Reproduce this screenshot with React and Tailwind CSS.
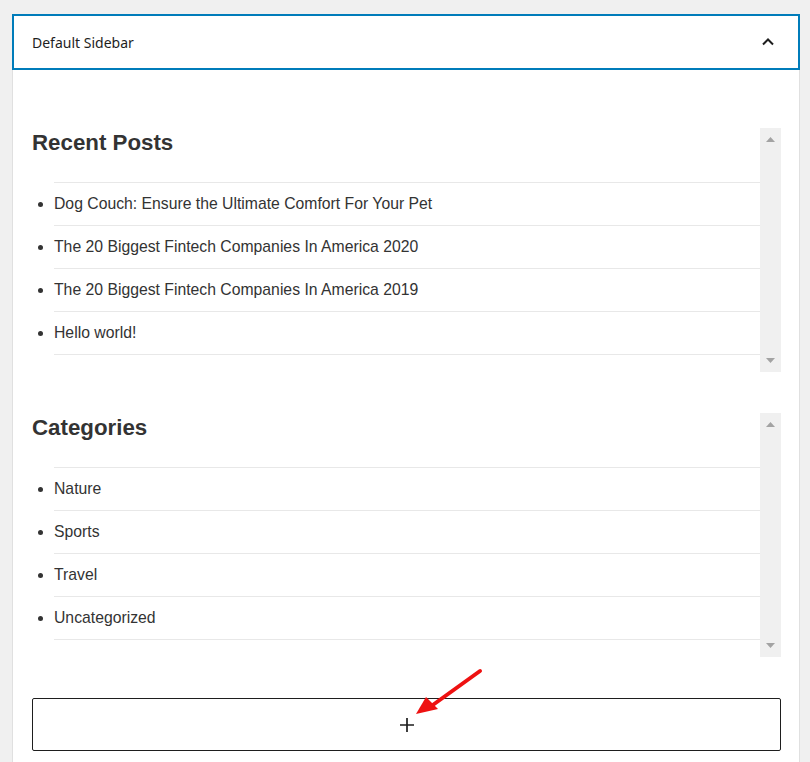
import React from 'react'

const recentPosts = [
    'Dog Couch: Ensure the Ultimate Comfort For Your Pet',
    'The 20 Biggest Fintech Companies In America 2020',
    'The 20 Biggest Fintech Companies In America 2019',
    'Hello world!',
]

const categories = ['Nature', 'Sports', 'Travel', 'Uncategorized']

const Scrollbar = () => (
    <div className="w-[21px] bg-[#f0f0f0] flex flex-col items-center justify-between py-[9px]">
        <svg width="9" height="5" viewBox="0 0 9 5"><path d="M0 5 L4.5 0 L9 5 Z" fill="#a3a3a3" /></svg>
        <svg width="9" height="5" viewBox="0 0 9 5"><path d="M0 0 L4.5 5 L9 0 Z" fill="#a3a3a3" /></svg>
    </div>
)

const Widget = ({ title, items }) => (
    <div className="flex h-[244px]">
        <div className="flex-1 pr-0">
            <h2 className="text-[22.3px] font-bold leading-[30px] text-[#333] mb-[24px]">{title}</h2>
            <ul className="list-disc pl-[22px] text-[15.75px] text-[#333]">
                {items.map((item, i) => (
                    <li
                        key={item}
                        className={`leading-[42px] border-t border-[#e8e8e8] ${i === items.length - 1 ? 'border-b' : ''}`}
                    >
                        {item}
                    </li>
                ))}
            </ul>
        </div>
        <Scrollbar />
    </div>
)

const App = () => {
    return (
        <div className="h-[762px] overflow-hidden bg-[#f0f0f0] pt-[14px] pl-[12px] pr-[10px] relative" style={{ fontFamily: '"Liberation Sans", Arial, sans-serif' }}>
            <div className="bg-white border-l border-r border-[#e0e0e0] min-h-[800px]">
                <div className="h-[56px] border-2 border-[#007cba] -mx-px pl-[18px] pr-[23px] flex items-center justify-between">
                    <span className="text-[14px] text-[#1e1e1e]" style={{ fontFamily: '"Noto Sans", "Open Sans", sans-serif' }}>Default Sidebar</span>
                    <svg width="14" height="10" viewBox="0 0 14 10" fill="none">
                        <path d="M2 7.5 L7 2.5 L12 7.5" stroke="#1e1e1e" strokeWidth="2" />
                    </svg>
                </div>
                <div className="pt-[58px] pl-[19px] pr-[18px] flex flex-col gap-[41px]">
                    <Widget title="Recent Posts" items={recentPosts} />
                    <Widget title="Categories" items={categories} />
                    <button className="h-[53px] border border-[#1e1e1e] rounded-[2px] flex items-center justify-center bg-white">
                        <svg width="14" height="14" viewBox="0 0 14 14">
                            <path d="M7 0 V14 M0 7 H14" stroke="#1e1e1e" strokeWidth="1.7" />
                        </svg>
                    </button>
                </div>
            </div>
            <svg className="absolute left-[410px] top-[665px]" width="80" height="56" viewBox="0 0 80 56">
                <path d="M70 6 L20 42" stroke="#ee1111" strokeWidth="4" strokeLinecap="round" />
                <path d="M6 49 L16 32 L28 44 Z" fill="#ee1111" />
            </svg>
        </div>
    )
}

export default App
